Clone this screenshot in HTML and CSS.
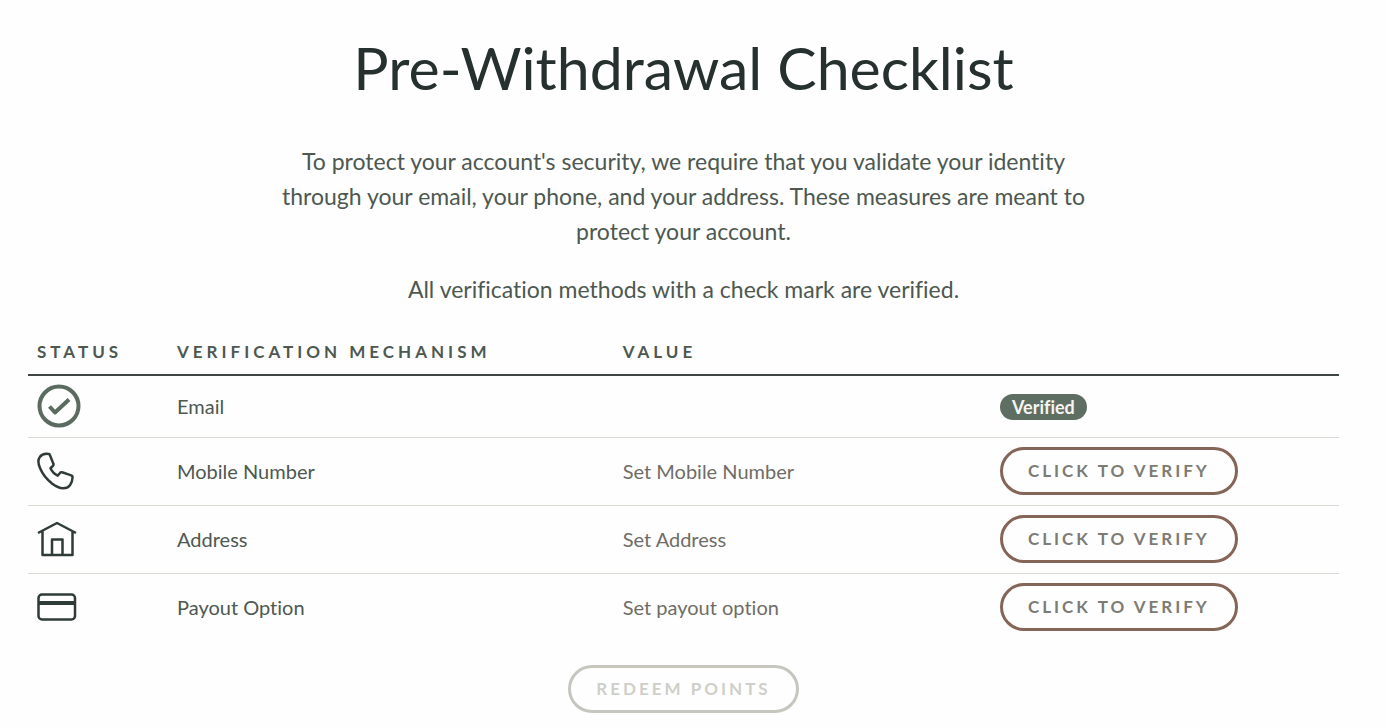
FILE: index.html
```html
<!DOCTYPE html>
<html lang="en">
<head>
    <meta charset="UTF-8">
    <meta name="viewport" content="width=device-width, initial-scale=1">
    <title>Pre-Withdrawal Checklist</title>

    <link rel="stylesheet" href="styles.css">
</head>
<body>
    <main class="checklist">
        <h1 class="title">Pre-Withdrawal Checklist</h1>
        <div class="intro">
            <p>To protect your account's security, we require that you validate your identity through your email, your phone, and your address. These measures are meant to protect your account.</p>
            <p>All verification methods with a check mark are verified.</p>
        </div>

        <table class="methods">
            <thead>
                <tr>
                    <th class="col-status">Status</th>
                    <th class="col-mechanism">Verification Mechanism</th>
                    <th class="col-value">Value</th>
                    <th class="col-action"></th>
                </tr>
            </thead>
            <tbody>
                <tr class="row-verified">
                    <td>
                        <svg class="icon icon-check" width="44" height="44" viewBox="0 0 44 44" role="img" aria-label="Verified">
                            <circle cx="22" cy="22" r="19.500"/>
                            <path d="M12.500 22.500l5.500 6 14-13"/>
                        </svg>
                    </td>
                    <td>Email</td>
                    <td></td>
                    <td><span class="badge">Verified</span></td>
                </tr>
                <tr>
                    <td>
                        <svg class="icon" width="40" height="40" viewBox="0 0 40 40" aria-hidden="true">
                            <path d="M11.800 3C8.500 2.500 4.500 3.600 2.800 6 .8 8.600 1.300 13 3 17c2.500 6 7 11.500 12 15.500 4 3 7.500 4.700 11 4.700 3 0 5.500-1 7-3 1.700-2.200 2.500-5 2.600-8.200 0-.9-.4-1.300-1.200-1.500-3.100-1-6.200-2.300-9.400-3.200-.9-.3-1.500 0-2 .7l-2.300 2.600c-3.200-1.500-5.700-4.100-7.200-7.400l2.300-2.200c.7-.7.9-1.500.5-2.400L12.900 4c-.2-.6-.5-.9-1.100-1z"/>
                        </svg>
                    </td>
                    <td>Mobile Number</td>
                    <td><a class="set-link" href="#">Set Mobile Number</a></td>
                    <td><button class="btn" type="button">Click to verify</button></td>
                </tr>
                <tr>
                    <td>
                        <svg class="icon" width="40" height="40" viewBox="0 0 40 40" aria-hidden="true">
                            <path d="M1 14L20 4l19 10M5.500 12v24h30V12M15 36V20.500h10.500V36"/>
                        </svg>
                    </td>
                    <td>Address</td>
                    <td><a class="set-link" href="#">Set Address</a></td>
                    <td><button class="btn" type="button">Click to verify</button></td>
                </tr>
                <tr>
                    <td>
                        <svg class="icon" width="40" height="40" viewBox="0 0 40 40" aria-hidden="true">
                            <rect x="1.500" y="7.500" width="36.500" height="25" rx="3.500"/>
                            <path class="stripe" d="M1.500 16h36.500"/>
                        </svg>
                    </td>
                    <td>Payout Option</td>
                    <td><a class="set-link" href="#">Set payout option</a></td>
                    <td><button class="btn" type="button">Click to verify</button></td>
                </tr>
            </tbody>
        </table>

        <div class="actions">
            <button class="btn" type="button" disabled>Redeem points</button>
        </div>
    </main>
</body>
</html>
```
FILE: styles.css
```css
*{
    box-sizing: border-box;
}
body{
    margin: 0;
    background-color: #fefefe;
    color: #4d5850;
    font-family: Lato, "Liberation Sans", sans-serif;
    font-size: 20px;
    line-height: 28px;
    font-variant-ligatures: none;
}
.checklist{
    padding: 30px 47px 12px 28px;
}
.title{
    margin: 0 0 38px;
    color: #26302f;
    font-size: 59px;
    font-weight: 400;
    line-height: 76px;
    text-align: center;
}
.intro{
    max-width: 840px;
    margin: 0 auto;
    font-size: 23px;
    line-height: 35px;
    text-align: center;
}
.intro p{
    margin: 0 0 23px;
}

/* table of verification methods */
.methods{
    width: 100%;
    border-collapse: collapse;
    table-layout: fixed;
}
.methods th{
    padding: 8px 9px;
    border-bottom: 2px solid #3d4643;
    font-size: 17px;
    font-weight: 700;
    letter-spacing: 4px;
    text-align: left;
    text-transform: uppercase;
    white-space: nowrap;
}
.methods td{
    height: 68px;
    padding: 0 9px;
    border-bottom: 1px solid #d9dad3;
    vertical-align: middle;
}
.methods .row-verified td{
    height: 62px;
}
.methods tr:last-child td{
    border-bottom: none;
}
.methods .col-status{
    width: 140px;
}
.methods .col-mechanism{
    width: 34%;
}
.methods .col-action{
    width: 348px;
}

.icon{
    display: block;
    fill: none;
    stroke: #2f3b37;
    stroke-width: 2.5;
    stroke-linejoin: round;
}
.icon-check{
    stroke: #5b6b5f;
    stroke-width: 4;
}
.stripe{
    stroke-width: 4;
}
.set-link{
    color: #6f6d66;
    text-decoration: none;
}
.badge{
    display: inline-block;
    padding: 0 12px;
    border-radius: 13px;
    background-color: #5f6e62;
    color: #f6f5f1;
    font-size: 18px;
    font-weight: 700;
    line-height: 26px;
}
.btn{
    padding: 0 25px;
    border: 3px solid #846557;
    border-radius: 24px;
    background-color: transparent;
    color: #7c7b74;
    font-family: inherit;
    font-size: 17px;
    font-weight: 700;
    letter-spacing: 3px;
    line-height: 42px;
    text-transform: uppercase;
    cursor: pointer;
}
.btn:disabled{
    border-color: #c6c6bf;
    color: #cfcfc9;
    cursor: default;
}
.actions{
    margin-top: 24px;
    text-align: center;
}
```
